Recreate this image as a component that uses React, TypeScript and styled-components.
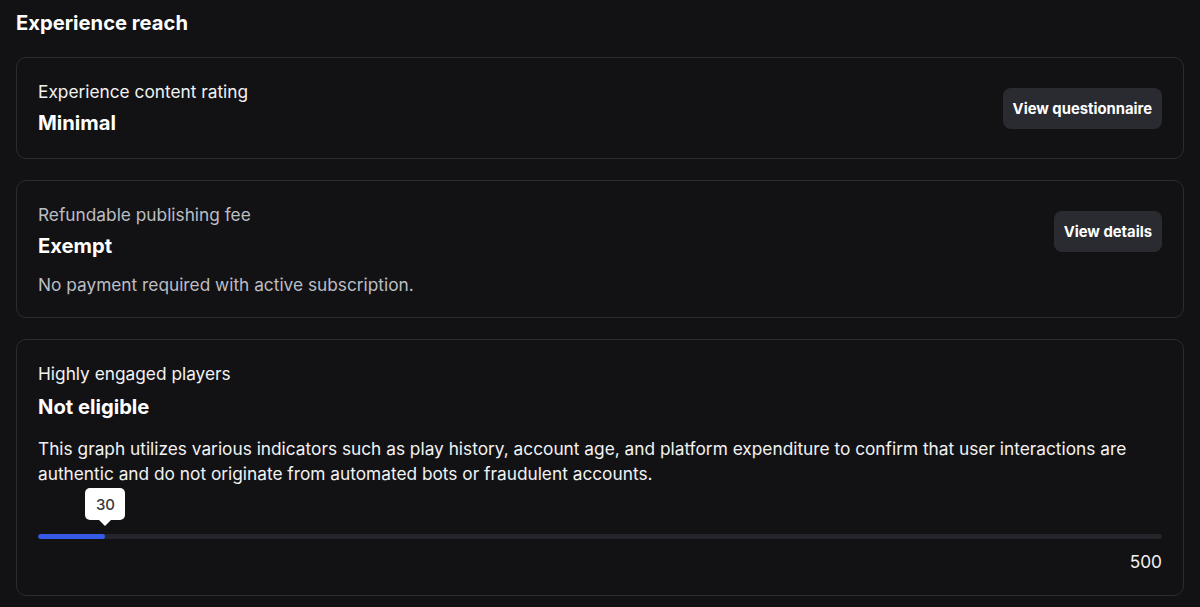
import styled, { createGlobalStyle } from 'styled-components';

const GlobalStyle = createGlobalStyle`
  html, body {
    margin: 0;
    padding: 0;
    background: #121215;
  }
  body {
    font-family: Inter, "Noto Sans", sans-serif;
    color: #f2f2f3;
  }
`;

const Page = styled.div`
  padding: 11px 16px 12px;
  display: flex;
  flex-direction: column;
`;

const Heading = styled.h2`
  margin: 0 0 22px;
  font-size: 20.2px;
  font-weight: 700;
  line-height: 24px;
  color: #ffffff;
`;

const Cards = styled.div`
  display: flex;
  flex-direction: column;
  gap: 21px;
`;

const Card = styled.section<{ $bottom?: number }>`
  border: 1px solid #2b2c31;
  border-radius: 10px;
  padding: 22px 21px ${(p) => p.$bottom ?? 21}px;
  display: flex;
  align-items: flex-start;
  gap: 20px;
`;

const Body = styled.div`
  flex: 1;
  display: flex;
  flex-direction: column;
`;

const Label = styled.div<{ $muted?: boolean }>`
  font-size: 17.3px;
  line-height: 24px;
  color: ${(p) => (p.$muted ? '#bdbec3' : '#f2f2f3')};
`;

const Value = styled.div<{ $gap?: number }>`
  margin-top: ${(p) => p.$gap ?? 5}px;
  font-size: 20.2px;
  font-weight: 700;
  line-height: 28px;
  color: #ffffff;
`;

const Note = styled.p<{ $muted?: boolean; $gap?: number }>`
  margin: ${(p) => p.$gap ?? 12}px 0 0;
  font-size: 17.3px;
  line-height: 25px;
  color: ${(p) => (p.$muted ? '#bdbec3' : '#f2f2f3')};
`;

const Button = styled.button`
  margin-top: 8px;
  height: 41px;
  padding: 0 10px;
  border: none;
  border-radius: 8px;
  background: #2a2a31;
  color: #ffffff;
  font-family: inherit;
  font-size: 14.8px;
  font-weight: 700;
  white-space: nowrap;
  cursor: pointer;
`;

const Meter = styled.div`
  margin-top: 2px;
  display: flex;
  flex-direction: column;
`;

const TrackArea = styled.div`
  position: relative;
  padding-top: 46px;
`;

const Track = styled.div`
  height: 5px;
  border-radius: 3px;
  background: #24252a;
  overflow: hidden;
`;

const Fill = styled.div`
  height: 100%;
  border-radius: 3px;
  background: #3659e6;
`;

const Bubble = styled.div`
  position: absolute;
  top: 0;
  transform: translateX(-50%);
  min-width: 40px;
  height: 32px;
  padding: 0 8px;
  box-sizing: border-box;
  background: #ffffff;
  color: #393a40;
  border-radius: 5px;
  display: flex;
  align-items: center;
  justify-content: center;
  font-size: 15px;
  font-weight: 500;

  &::after {
    content: '';
    position: absolute;
    bottom: -6px;
    left: 50%;
    margin-left: -6px;
    border-left: 6px solid transparent;
    border-right: 6px solid transparent;
    border-top: 6px solid #ffffff;
  }
`;

const MaxValue = styled.div`
  margin-top: 11px;
  align-self: flex-end;
  font-size: 17.3px;
  line-height: 24px;
  color: #f2f2f3;
`;

const value = 30;
const max = 500;

export default function App() {
  const pct = (value / max) * 100;
  return (
    <>
      <GlobalStyle />
      <Page>
        <Heading>Experience reach</Heading>
        <Cards>
          <Card>
            <Body>
              <Label>Experience content rating</Label>
              <Value>Minimal</Value>
            </Body>
            <Button>View questionnaire</Button>
          </Card>

          <Card $bottom={20}>
            <Body>
              <Label $muted>Refundable publishing fee</Label>
              <Value>Exempt</Value>
              <Note $muted>No payment required with active subscription.</Note>
            </Body>
            <Button>View details</Button>
          </Card>

          <Card>
            <Body>
              <Label>Highly engaged players</Label>
              <Value $gap={7}>Not eligible</Value>
              <Note $gap={15}>
                This graph utilizes various indicators such as play history, account age, and platform
                expenditure to confirm that user interactions are authentic and do not originate from
                automated bots or fraudulent accounts.
              </Note>
              <Meter>
                <TrackArea>
                  <Bubble style={{ left: `${pct}%` }}>{value}</Bubble>
                  <Track>
                    <Fill style={{ width: `${pct}%` }} />
                  </Track>
                </TrackArea>
                <MaxValue>{max}</MaxValue>
              </Meter>
            </Body>
          </Card>
        </Cards>
      </Page>
    </>
  );
}
